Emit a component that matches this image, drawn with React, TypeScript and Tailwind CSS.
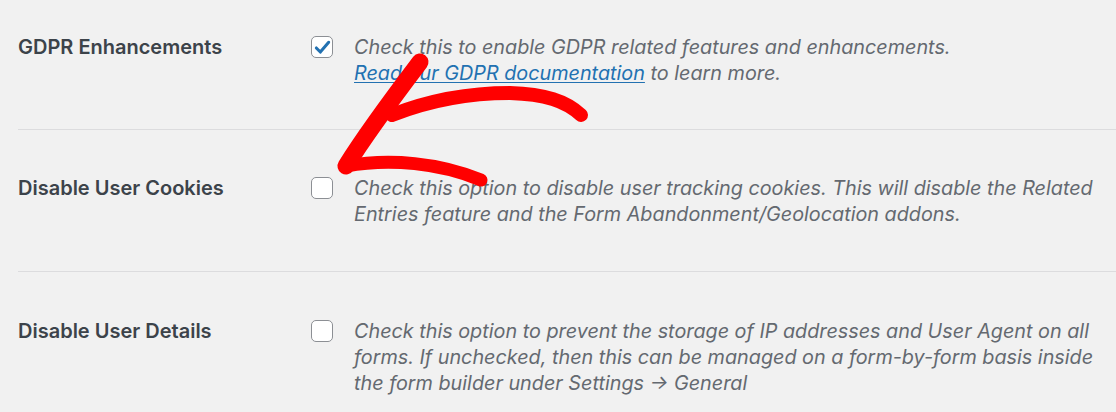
import type { ReactNode } from 'react';

type Row = {
  label: string;
  checked: boolean;
  body: ReactNode;
  pad: string;
  last?: boolean;
};

const rows: Row[] = [
  {
    label: 'GDPR Enhancements',
    checked: true,
    pad: 'pt-[34px] pb-[43px]',
    body: (
      <>
        Check this to enable GDPR related features and enhancements.
        <br />
        <a href="#" className="text-[#2271b1] underline underline-offset-2">
          Read our GDPR documentation
        </a>{' '}
        to learn more.
      </>
    ),
  },
  {
    label: 'Disable User Cookies',
    checked: false,
    pad: 'pt-[45px] pb-[44px]',
    body: (
      <>
        Check this option to disable user tracking cookies. This will disable the Related
        <br />
        Entries feature and the Form Abandonment/Geolocation addons.
      </>
    ),
  },
  {
    label: 'Disable User Details',
    checked: false,
    pad: 'pt-[46px] pb-[40px]',
    last: true,
    body: (
      <>
        Check this option to prevent the storage of IP addresses and User Agent on all
        <br />
        forms. If unchecked, then this can be managed on a form-by-form basis inside
        <br />
        the form builder under Settings → General
      </>
    ),
  },
];

function Checkbox({ checked }: { checked: boolean }) {
  return (
    <div className="mt-[2px] flex h-[22px] w-[22px] shrink-0 items-center justify-center rounded-[5px] border-[1.5px] border-[#8c8f94] bg-white">
      {checked && (
        <svg viewBox="0 0 20 20" className="h-[19px] w-[19px]">
          <path
            d="M3.5 10.5l4.2 4.3L16.5 4.5"
            fill="none"
            stroke="#2271b1"
            strokeWidth="3.2"
            strokeLinecap="round"
            strokeLinejoin="round"
          />
        </svg>
      )}
    </div>
  );
}

function RedArrow() {
  return (
    <svg
      className="pointer-events-none absolute left-0 top-0"
      width="1116"
      height="412"
      viewBox="0 0 1116 412"
    >
      <g fill="none" stroke="#ff0000" strokeLinecap="round" strokeLinejoin="round">
        {/* long curved shaft */}
        <path d="M392 115 C430 100 470 93 510 93 C545 94 566 101 581 115" strokeWidth="14" />
        {/* upper head stroke */}
        <path d="M420 62 C395 95 366 134 346 166" strokeWidth="17" />
        {/* lower head stroke */}
        <path d="M346 166 C390 158 440 163 481 180" strokeWidth="13" />
      </g>
    </svg>
  );
}

export default function App() {
  return (
    <div className="relative h-[412px] w-[1116px] overflow-hidden bg-[#f1f1f1] font-['Inter','Liberation_Sans',sans-serif]">
      <div className="pl-[18px]">
        {rows.map((row) => (
          <div
            key={row.label}
            className={`flex ${row.pad} ${row.last ? '' : 'border-b border-[#dcdcde]'}`}
          >
            <div className="w-[293px] shrink-0 text-[20px] font-semibold leading-[26px] text-[#3c434a]">
              {row.label}
            </div>
            <Checkbox checked={row.checked} />
            <p className="ml-[21px] whitespace-nowrap text-[19.8px] italic leading-[26px] text-[#646970]">
              {row.body}
            </p>
          </div>
        ))}
      </div>
      <RedArrow />
    </div>
  );
}
